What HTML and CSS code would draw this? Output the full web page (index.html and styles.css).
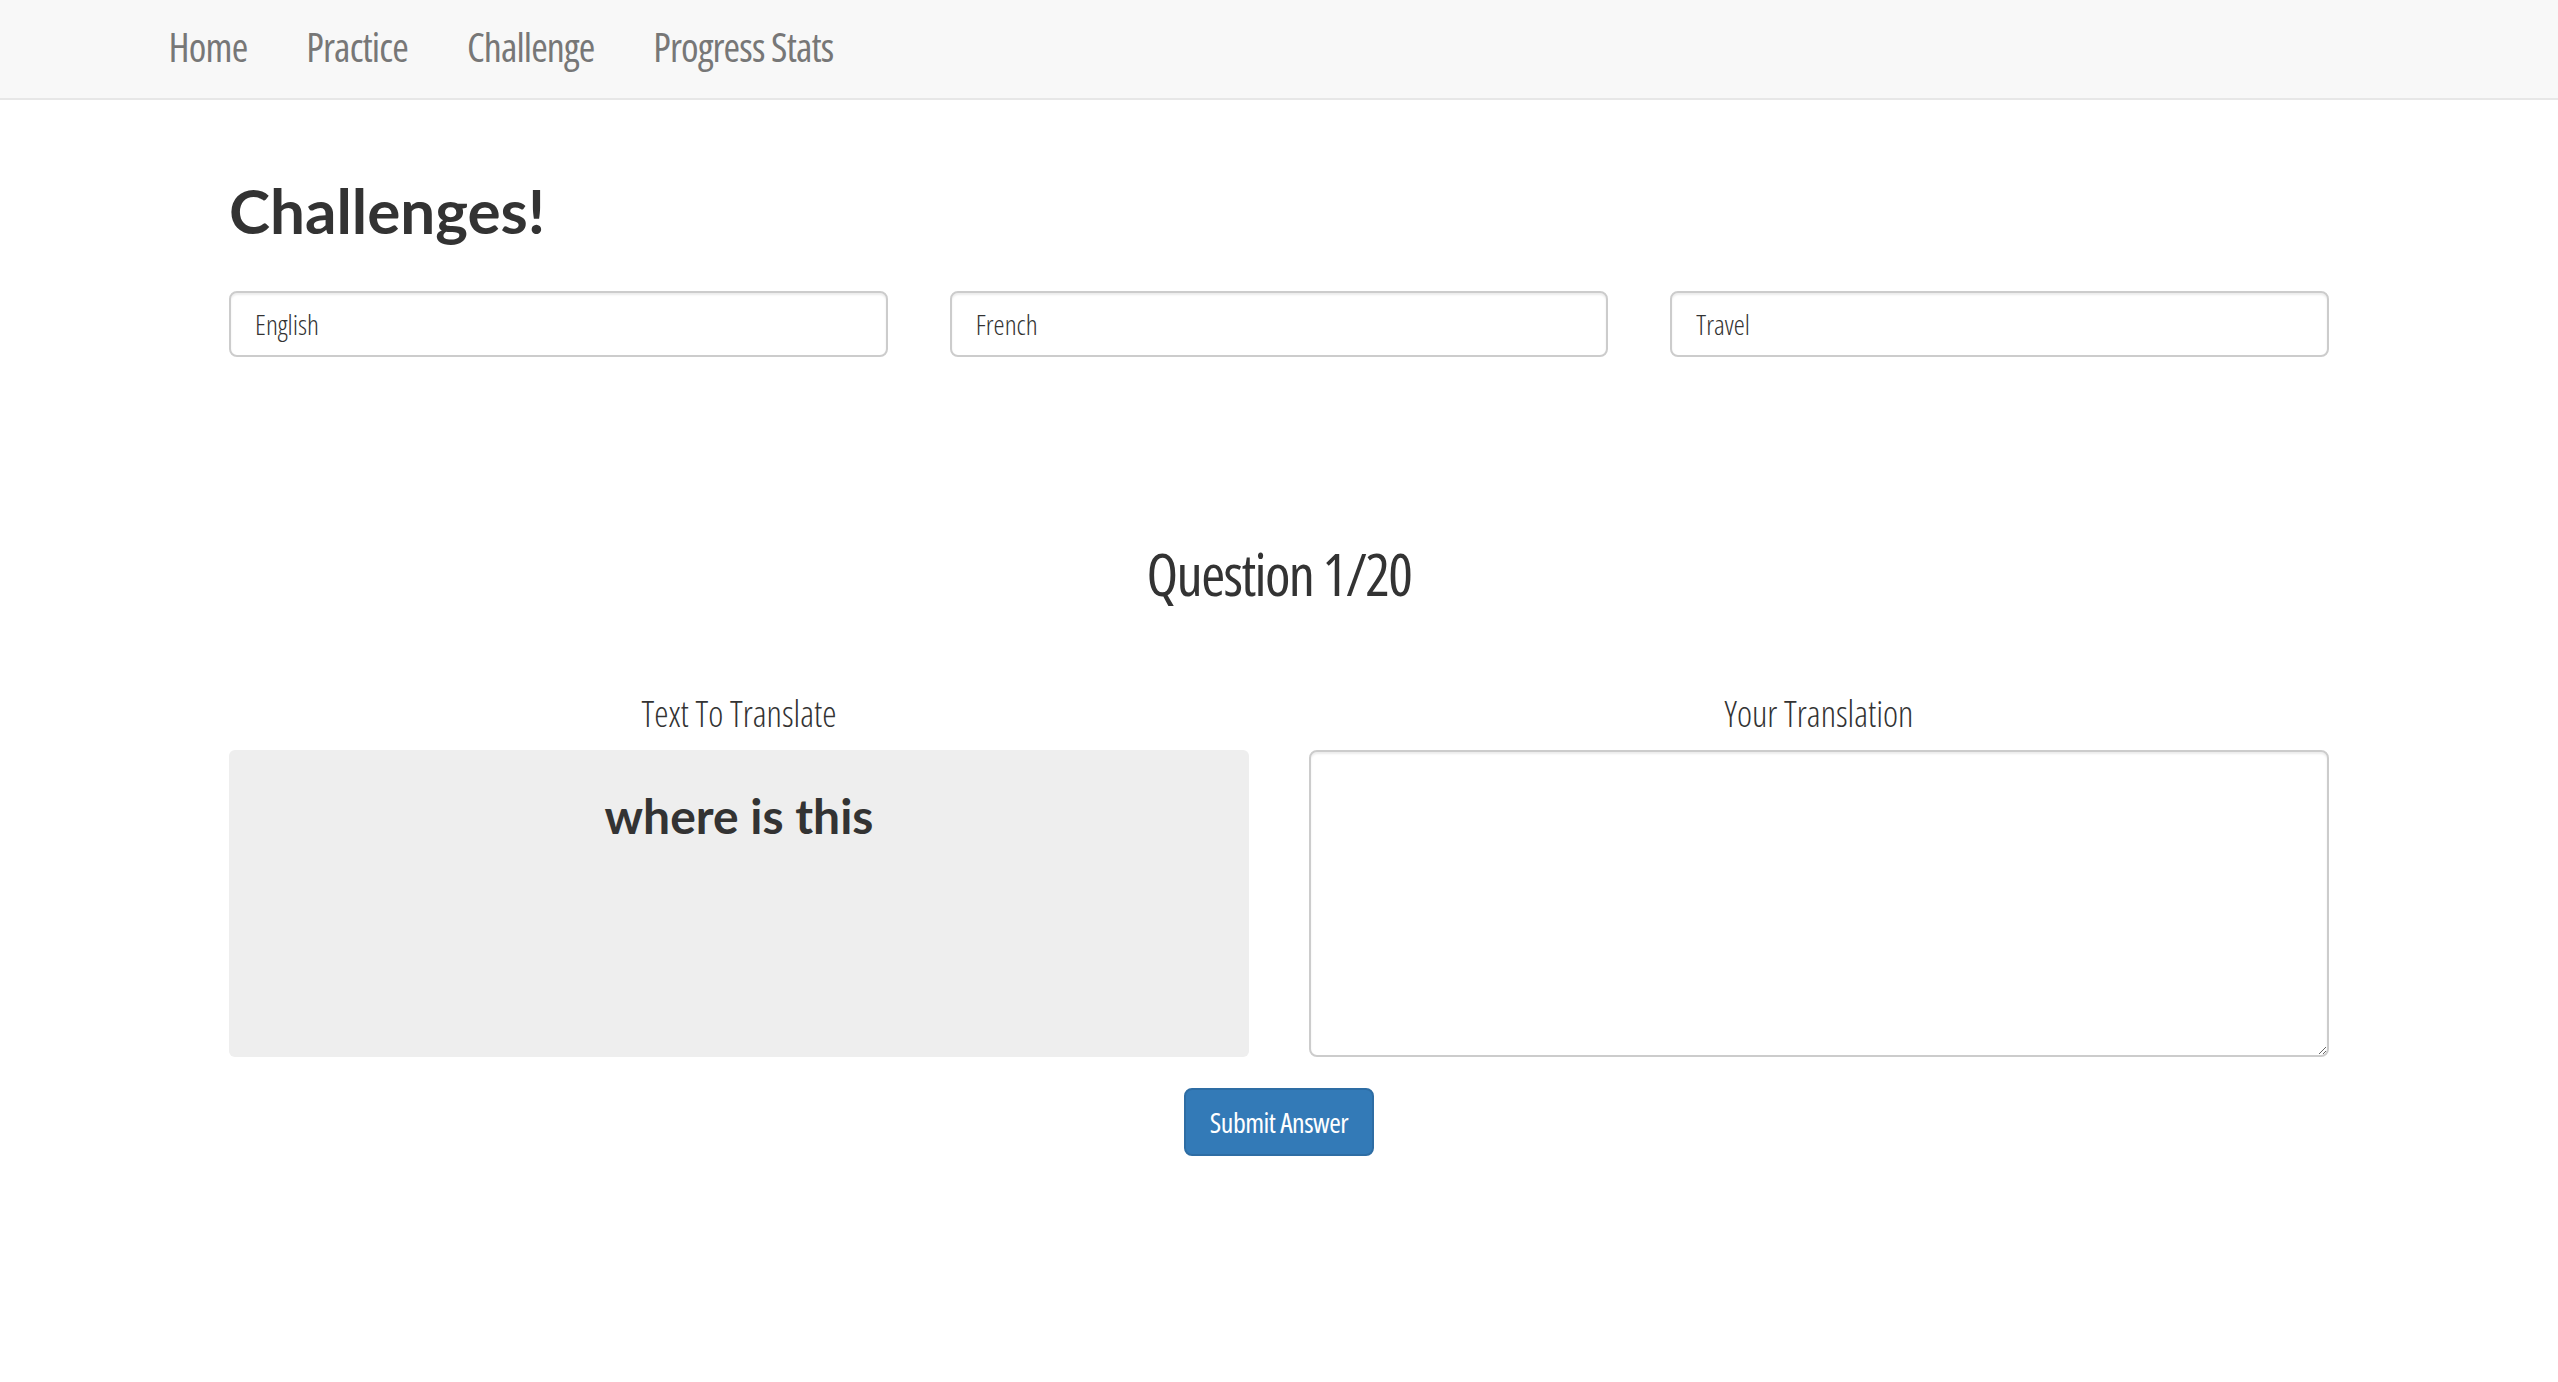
FILE: index.html
```html
<!DOCTYPE html>
<html lang="en">
<head>
<meta charset="utf-8">
<title>Challenges</title>
<link rel="stylesheet" href="styles.css">
</head>
<body>
<nav class="navbar">
  <ul class="nav">
    <li><a class="nav-link" href="#">Home</a></li>
    <li><a class="nav-link" href="#">Practice</a></li>
    <li><a class="nav-link" href="#">Challenge</a></li>
    <li><a class="nav-link" href="#">Progress Stats</a></li>
  </ul>
</nav>
<main class="container">
  <h1 class="page-title">Challenges!</h1>
  <div class="selectors">
    <input class="form-control" type="text" value="English">
    <input class="form-control" type="text" value="French">
    <input class="form-control" type="text" value="Travel">
  </div>
  <h2 class="question">Question 1/20</h2>
  <div class="panels">
    <section class="panel-col">
      <h4 class="panel-label">Text To Translate</h4>
      <div class="source-box">
        <h3 class="source-text">where is this</h3>
      </div>
    </section>
    <section class="panel-col">
      <h4 class="panel-label">Your Translation</h4>
      <textarea class="translation-box"></textarea>
    </section>
  </div>
  <div class="actions">
    <button class="btn-primary" type="button">Submit Answer</button>
  </div>
</main>
</body>
</html>
```
FILE: styles.css
```css
* { box-sizing: border-box; }
html, body { margin: 0; padding: 0; background: #fff; }
body {
  font-family: "Open Sans", "Liberation Sans", sans-serif;
  font-stretch: 75%;
  font-variation-settings: "wdth" 75;
  color: #333;
}
.navbar {
  height: 100px;
  background: #f8f8f8;
  border-bottom: 2px solid #e7e7e7;
}
.nav {
  list-style: none;
  margin: 0;
  padding: 0 0 0 139px;
  display: flex;
}
.nav-link {
  display: block;
  padding: 0 29.5px;
  line-height: 94px;
  font-size: 40px;
  font-weight: 400;
  letter-spacing: -0.85px;
  color: #777;
  text-decoration: none;
}
.container {
  width: 2100px;
  margin: 0 auto;
  padding-top: 76px;
}
.page-title {
  margin: 0;
  font-family: "Lato", "Liberation Sans", sans-serif;
  font-stretch: 100%;
  font-variation-settings: normal;
  font-weight: 700;
  font-size: 62px;
  line-height: 68px;
  color: #333;
}
.selectors {
  margin-top: 47px;
  display: grid;
  grid-template-columns: repeat(3, 1fr);
  column-gap: 62px;
}
.form-control {
  display: block;
  width: 100%;
  height: 66px;
  padding: 0 24px;
  font-family: inherit;
  font-stretch: 75%;
  font-variation-settings: "wdth" 75;
  font-weight: 300;
  font-size: 28px;
  color: #333;
  background: #fff;
  border: 2px solid #ccc;
  border-radius: 8px;
  box-shadow: inset 0 2px 2px rgba(0,0,0,.075);
  outline: none;
}
.question {
  margin: 184px 0 0;
  text-align: center;
  font-weight: 400;
  font-size: 58px;
  letter-spacing: -1.6px;
  line-height: 66px;
  color: #333;
}
.panels {
  margin-top: 87px;
  display: grid;
  grid-template-columns: 1fr 1fr;
  column-gap: 60px;
}
.panel-col { display: flex; flex-direction: column; }
.panel-label {
  margin: 0 0 16px;
  text-align: center;
  font-weight: 300;
  font-size: 36px;
  line-height: 40px;
  color: #333;
}
.source-box {
  height: 307px;
  background: #eee;
  border-radius: 6px;
  padding-top: 39px;
}
.source-text {
  margin: 0;
  text-align: center;
  font-family: "Lato", "Liberation Sans", sans-serif;
  font-stretch: 100%;
  font-variation-settings: normal;
  font-weight: 700;
  font-size: 48px;
  line-height: 53px;
  color: #333;
}
.translation-box {
  display: block;
  width: 100%;
  height: 307px;
  border: 2px solid #ccc;
  border-radius: 8px;
  box-shadow: inset 0 2px 2px rgba(0,0,0,.075);
  padding: 12px 24px;
  font-family: inherit;
  font-size: 28px;
  outline: none;
  resize: vertical;
}
.actions {
  margin-top: 31px;
  display: flex;
  justify-content: center;
}
.btn-primary {
  height: 68px;
  padding: 0 24px;
  background: #337ab7;
  border: 2px solid #2e6da4;
  border-radius: 8px;
  color: #fff;
  font-family: inherit;
  font-stretch: 75%;
  font-variation-settings: "wdth" 75;
  font-weight: 400;
  font-size: 28px;
  letter-spacing: -0.5px;
  cursor: pointer;
}
```
